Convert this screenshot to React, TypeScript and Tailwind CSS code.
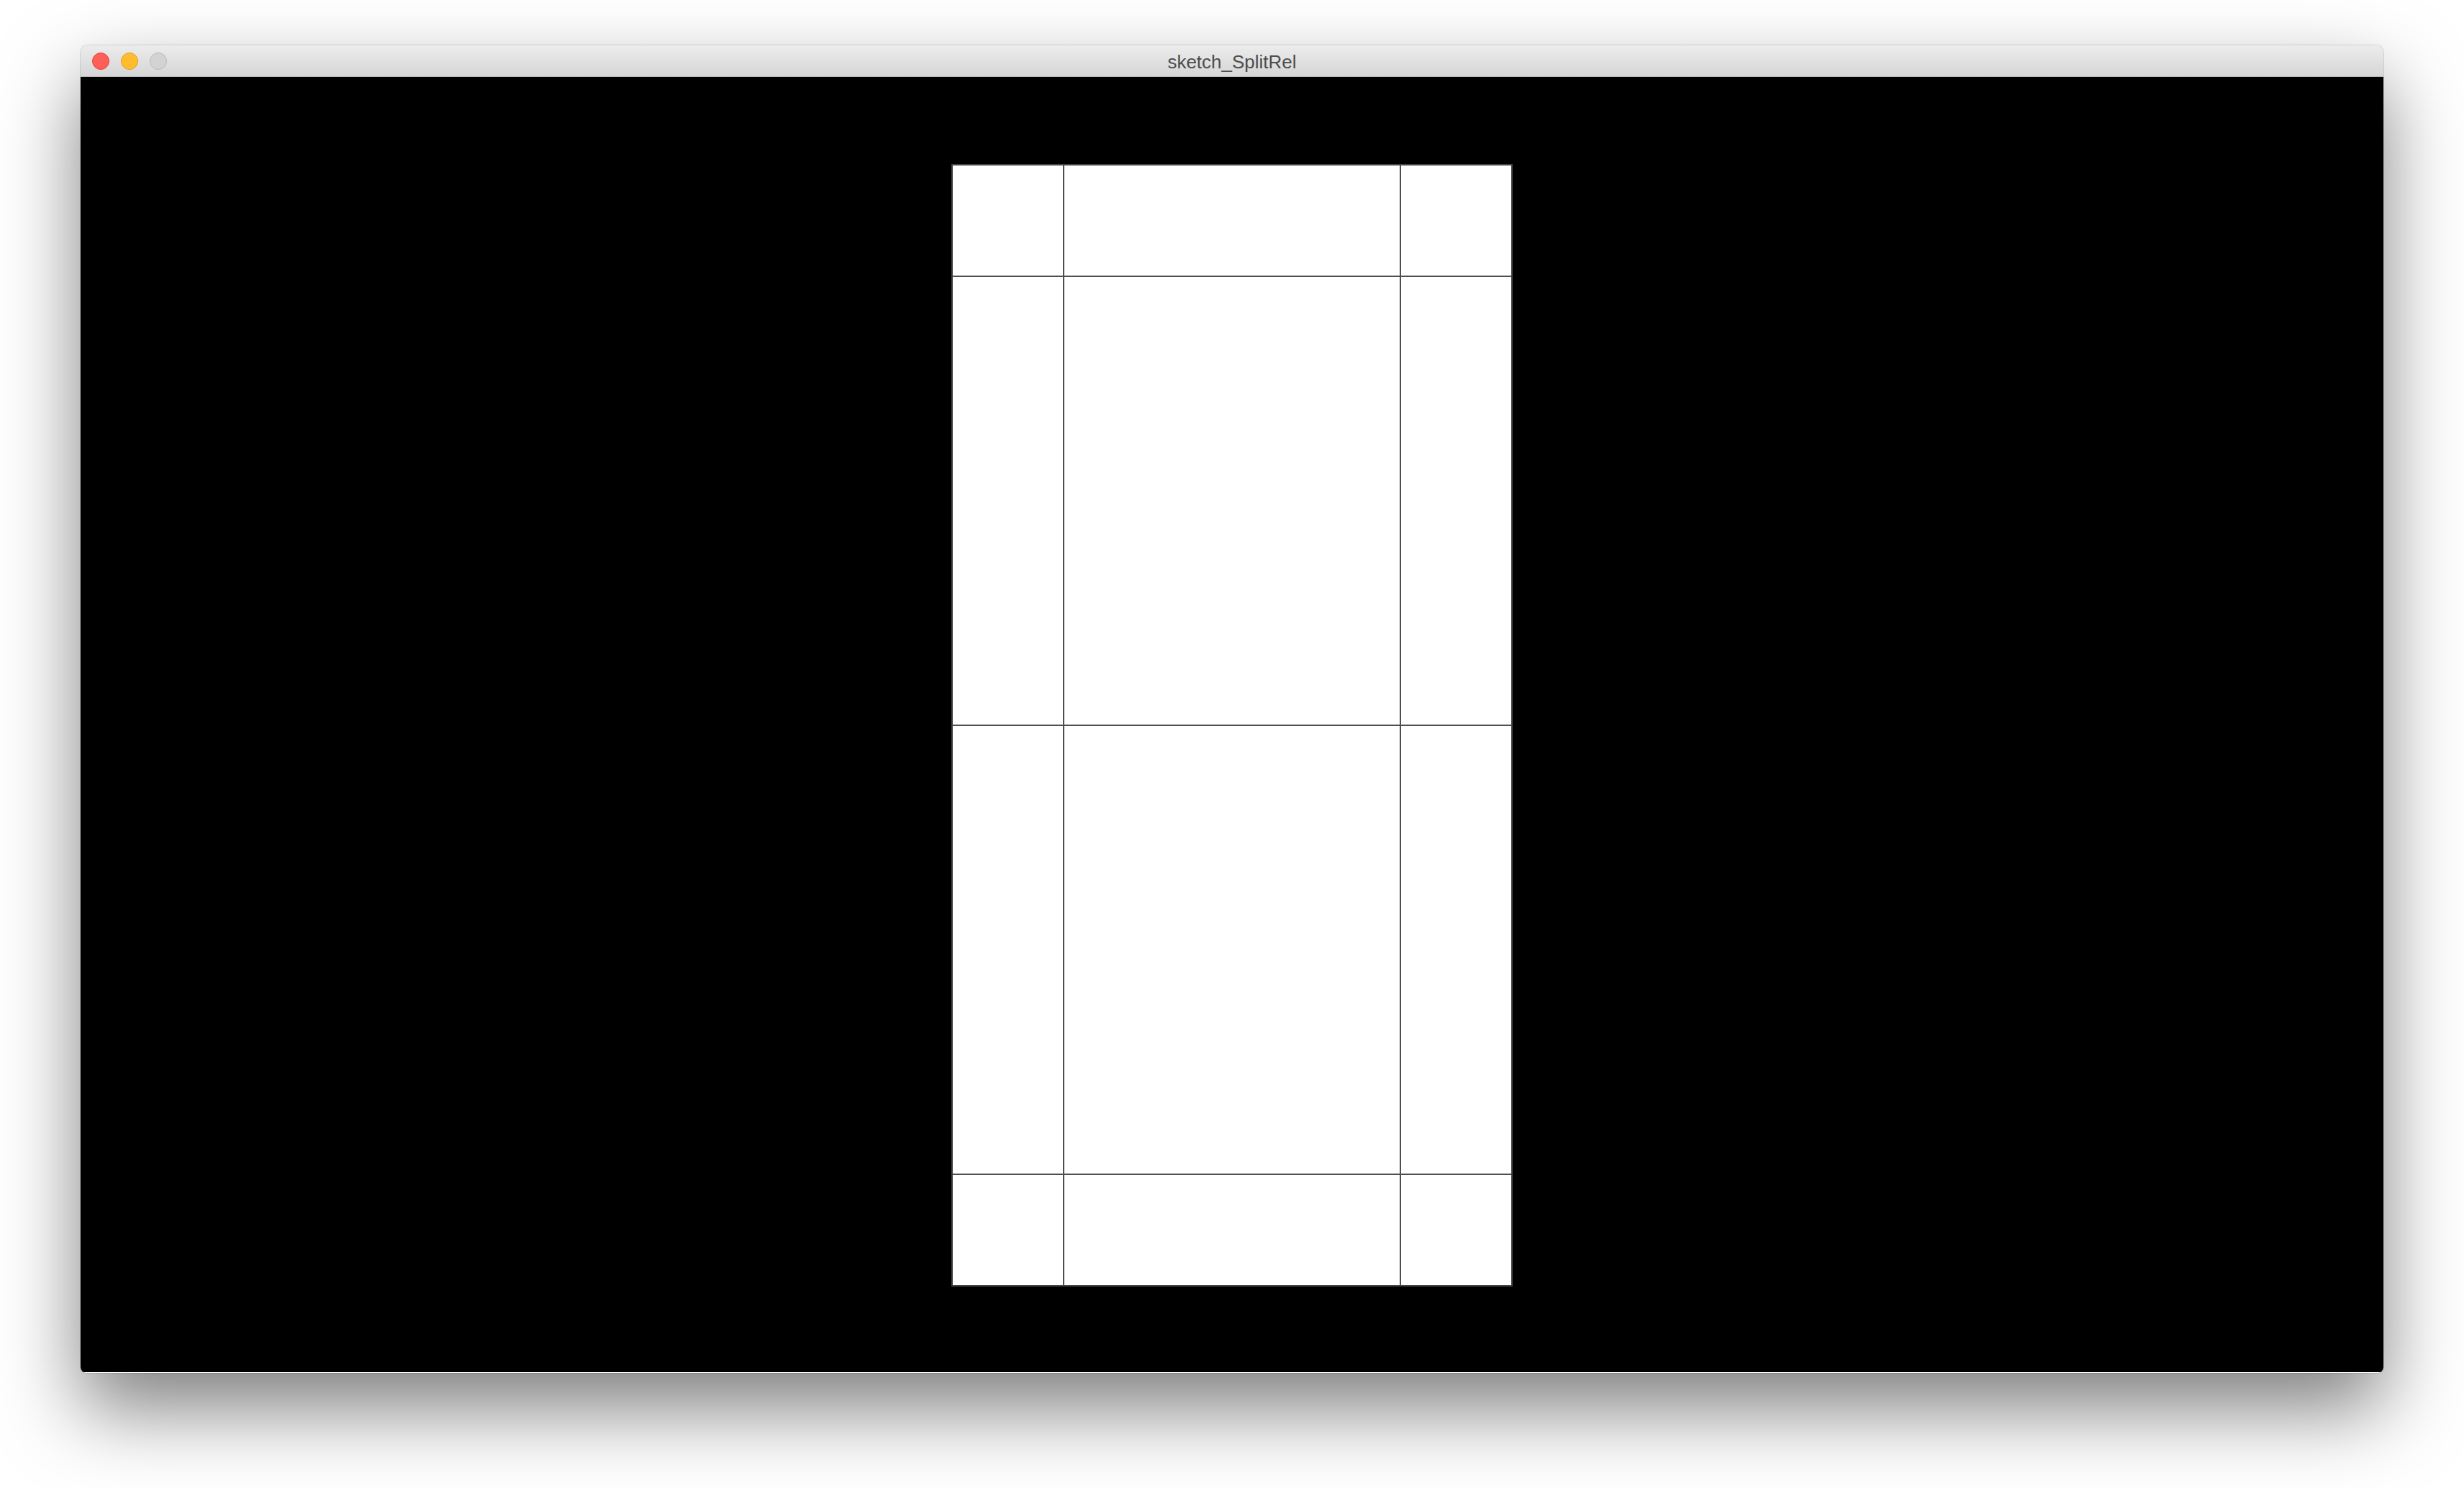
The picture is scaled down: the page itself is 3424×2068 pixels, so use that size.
const rows = ['h-[153px]', 'h-[622px]', 'h-[622px]', 'h-[153px]'];

function TrafficLights() {
  return (
    <div className="absolute left-[16px] top-[10px] flex gap-[16px]">
      <span className="h-[24px] w-[24px] rounded-full border border-[#e0443e] bg-[#fe5f57]" />
      <span className="h-[24px] w-[24px] rounded-full border border-[#dea123] bg-[#febc2e]" />
      <span className="h-[24px] w-[24px] rounded-full border border-[#b9b9b9] bg-[#d3d3d3]" />
    </div>
  );
}

function SplitGrid() {
  return (
    <div className="grid grid-cols-[153px_466px_153px] gap-[2px] border-2 border-[#444] bg-[#4f4f4f]">
      {rows.map((h, r) =>
        [0, 1, 2].map((c) => <div key={`${r}-${c}`} className={`${h} bg-white`} />)
      )}
    </div>
  );
}

export default function App() {
  return (
    <div className="flex h-[2068px] w-[3424px] justify-center bg-white pt-[63px]">
      <div className="flex h-[1845px] w-[3200px] flex-col overflow-hidden rounded-t-[10px] rounded-b-[8px] shadow-[0_50px_110px_rgba(0,0,0,0.5),0_0_0_1px_rgba(0,0,0,0.12)]">
        <div className="relative flex h-[44px] shrink-0 items-center justify-center border-b border-[#b8b8b8] bg-gradient-to-b from-[#ececec] to-[#d6d6d6] pt-[4px]">
          <TrafficLights />
          <span className="text-[26px] text-[#4d4d4d] [font-family:'Liberation_Sans',Arial,sans-serif]">
            sketch_SplitRel
          </span>
        </div>
        <div className="flex h-[1800px] justify-center bg-black pt-[121px]">
          <div className="h-[1560px]">
            <SplitGrid />
          </div>
        </div>
      </div>
    </div>
  );
}
